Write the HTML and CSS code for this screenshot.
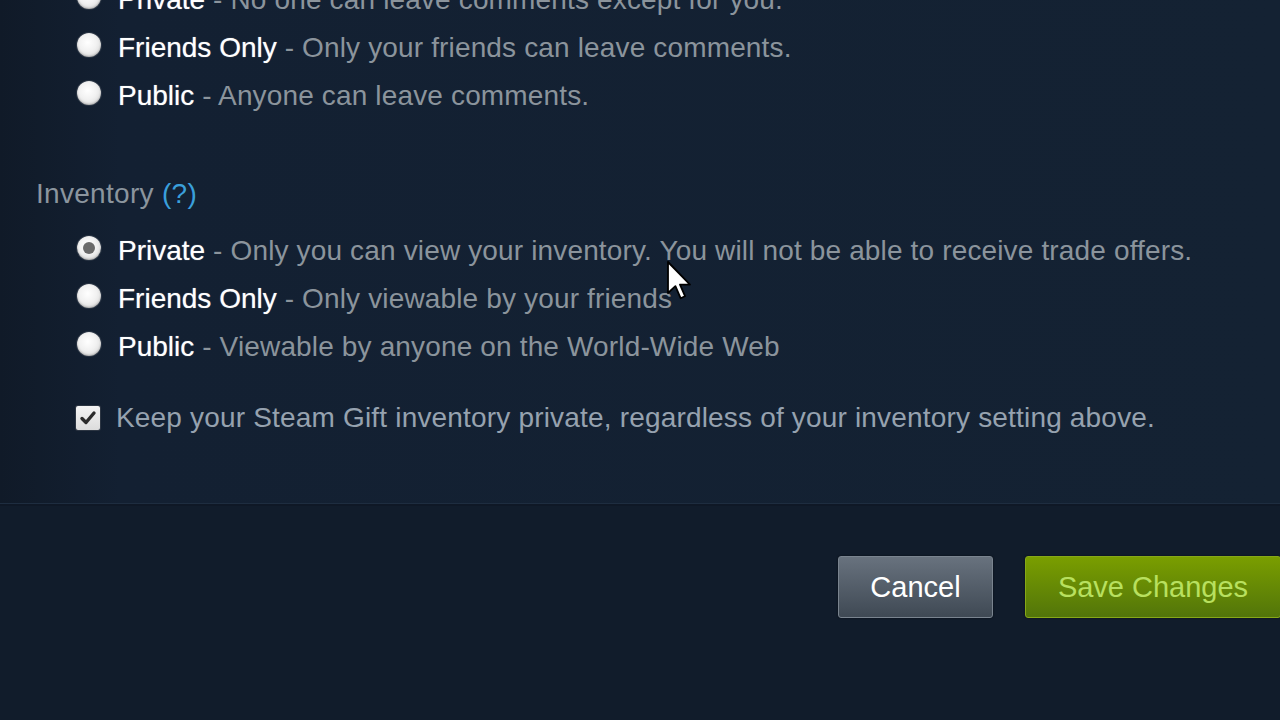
FILE: index.html
```html
<!DOCTYPE html>
<html lang="en">
<head>
    <meta charset="UTF-8">
    <meta name="viewport" content="width=device-width, initial-scale=1.0">
    <title>Edit Profile - Privacy Settings</title>
    <link rel="stylesheet" href="styles.css">
</head>
<body>
    <div class="panel">
        <!-- comment permissions -->
        <div class="group">
            <label class="option">
                <span class="radio"></span>
                <span class="label">Private</span>
                <span class="desc">&nbsp;- No one can leave comments except for you.</span>
            </label>
            <label class="option">
                <span class="radio"></span>
                <span class="label">Friends Only</span>
                <span class="desc">&nbsp;- Only your friends can leave comments.</span>
            </label>
            <label class="option">
                <span class="radio"></span>
                <span class="label">Public</span>
                <span class="desc">&nbsp;- Anyone can leave comments.</span>
            </label>
        </div>

        <div class="heading">Inventory <a class="help" href="#">(?)</a></div>

        <div class="group">
            <label class="option">
                <span class="radio checked"></span>
                <span class="label">Private</span>
                <span class="desc">&nbsp;- Only you can view your inventory. You will not be able to receive trade offers.</span>
            </label>
            <label class="option">
                <span class="radio"></span>
                <span class="label">Friends Only</span>
                <span class="desc">&nbsp;- Only viewable by your friends</span>
            </label>
            <label class="option">
                <span class="radio"></span>
                <span class="label">Public</span>
                <span class="desc">&nbsp;- Viewable by anyone on the World-Wide Web</span>
            </label>
        </div>

        <label class="check-row">
            <span class="checkbox">
                <svg viewBox="0 0 24 24" width="24" height="24">
                    <path d="M6 12.5 L10 16.5 L18 7" fill="none" stroke="#2b2b2b" stroke-width="3.4" stroke-linecap="round" stroke-linejoin="round"/>
                </svg>
            </span>
            <span class="check-text">Keep your Steam Gift inventory private, regardless of your inventory setting above.</span>
        </label>
    </div>

    <div class="actions">
        <button class="btn btn-cancel">Cancel</button>
        <button class="btn btn-save">Save Changes</button>
    </div>

    <!-- mouse pointer -->
    <svg class="pointer" viewBox="0 0 12 20" width="24" height="40">
        <path d="M0.5 0.5 L0.5 16 L4.2 12.6 L6.8 18.6 L9 17.6 L6.5 11.8 L11.5 11.8 Z" fill="#fff" stroke="#000" stroke-width="0.9" stroke-linejoin="round"/>
    </svg>
</body>
</html>
```

FILE: styles.css
```css
body {
    margin: 0;
    background-color: #111c2b;
    font-family: "Liberation Sans", Arial, sans-serif;
    font-size: 28px;
    overflow: hidden;
    position: relative;
    height: 720px;
}

.panel {
    margin-top: -24px;
    padding: 0 0 61px 36px;
    background: linear-gradient(to right, #101a28 0, #132032 120px, #142233 100%);
    border-bottom: 1px solid #1e2d40;
    box-shadow: 0 2px 0 #0f1826;
}

.option {
    display: flex;
    align-items: center;
    height: 48px;
    padding-left: 41px;
    white-space: nowrap;
}

.radio {
    width: 24px;
    height: 24px;
    border-radius: 50%;
    margin-right: 17px;
    margin-bottom: 6px;
    flex-shrink: 0;
    background: radial-gradient(circle at 45% 40%, #ffffff 0, #f1f1f1 45%, #cfcfcf 100%);
    box-shadow: 0 0 0 1px #2a3544, inset 0 -1px 2px rgba(0, 0, 0, 0.25);
    position: relative;
}

.radio.checked::after {
    content: "";
    position: absolute;
    left: 6px;
    top: 6px;
    width: 12px;
    height: 12px;
    border-radius: 50%;
    background: #6a6a6a;
}

.label {
    color: #ffffff;
    text-shadow: 0 0 1px rgba(255, 255, 255, 0.6);
}

.desc {
    color: #8b949c;
    letter-spacing: 0.15px;
}

.heading {
    margin-top: 50px;
    margin-bottom: 9px;
    line-height: 48px;
    color: #8b959e;
    letter-spacing: 0.3px;
}

.help {
    color: #3a9fdb;
    text-decoration: none;
}

.check-row {
    display: flex;
    align-items: center;
    height: 48px;
    margin-top: 23px;
    padding-left: 40px;
    white-space: nowrap;
}

.checkbox {
    width: 24px;
    height: 24px;
    margin-right: 16px;
    margin-bottom: 1px;
    border-radius: 2px;
    background: linear-gradient(#f4f4f4, #dcdcdc);
    box-shadow: 0 0 0 1px #2c3542;
    display: flex;
}

.check-text {
    color: #96a2af;
    letter-spacing: 0.18px;
}

.actions {
    display: flex;
    justify-content: flex-end;
    gap: 32px;
    margin-top: 52px;
    margin-right: -1px;
}

.btn {
    height: 62px;
    border-radius: 3px;
    font-family: "Liberation Sans", Arial, sans-serif;
    font-size: 29px;
    cursor: pointer;
}

.btn-cancel {
    width: 155px;
    color: #ffffff;
    background: linear-gradient(#68727e, #3f4954);
    border: 1px solid #7a848f;
    box-shadow: 0 0 2px rgba(0, 0, 0, 0.6);
}

.btn-save {
    width: 256px;
    color: #b8e05f;
    background: linear-gradient(#7a9e00, #52750a);
    border: 1px solid #86a818;
    box-shadow: 0 0 2px rgba(0, 0, 0, 0.6);
}

.pointer {
    position: absolute;
    left: 667px;
    top: 261px;
}
```
